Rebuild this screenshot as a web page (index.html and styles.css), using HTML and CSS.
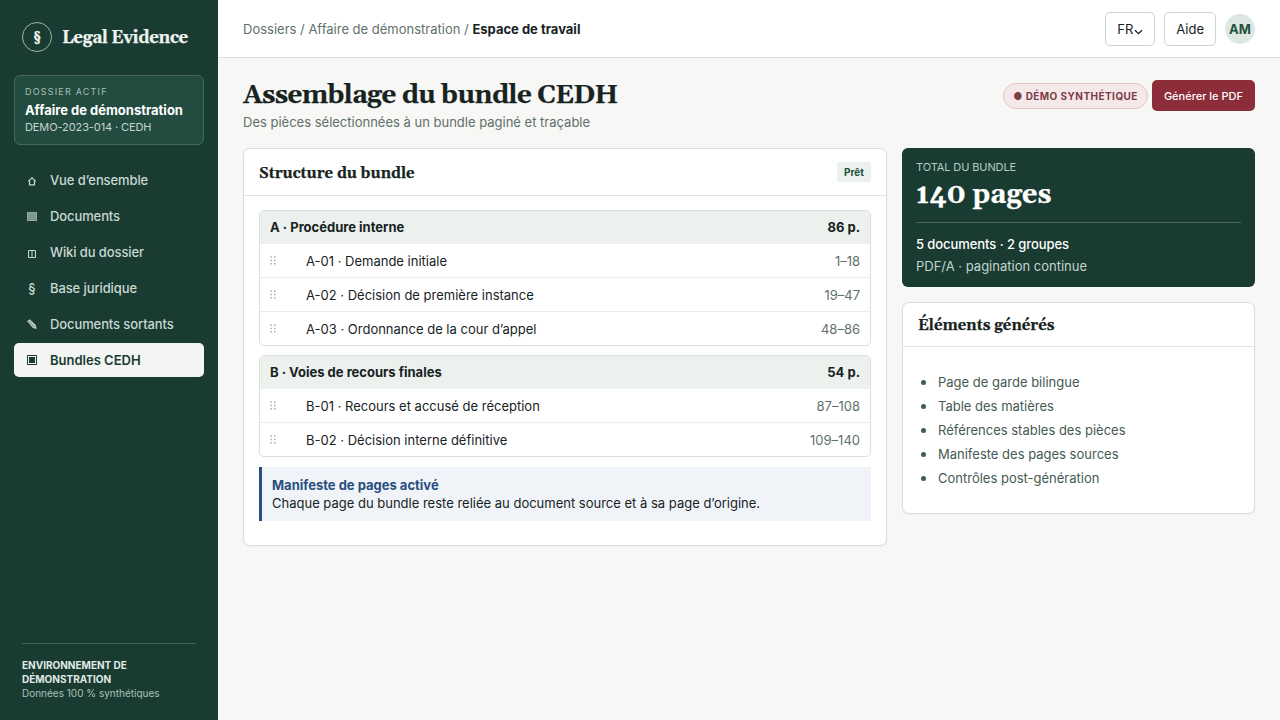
FILE: index.html
```
<!DOCTYPE html>
<html lang="fr">
<head>
    <meta charset="UTF-8">
    <meta name="viewport" content="width=device-width, initial-scale=1.0">
    <title>Legal Evidence</title>
    <link rel="stylesheet" href="styles.css">
</head>
<body>
    <svg class="sprite">
        <symbol id="grip" viewBox="0 0 6 9">
            <path d="M.4 1h1.5M4 1h1.5M.4 4.4h1.5M4 4.4h1.5M.4 7.8h1.5M4 7.8h1.5" stroke="currentColor" stroke-width="1.5"/>
        </symbol>
    </svg>
    <div class="app">
        <aside class="sidebar">
            <div class="brand"><span class="brand-mark">§</span><span>Legal Evidence</span></div>
            <div class="case">
                <small>DOSSIER ACTIF</small>
                <strong>Affaire de démonstration</strong>
                <span>DEMO-2023-014 · CEDH</span>
            </div>
            <nav class="nav">
                <a><svg viewBox="0 0 16 16"><path d="M4.3 9.4 8 5.9l3.7 3.5M5.5 8.8v4h5v-4" fill="none" stroke="currentColor" stroke-width="1.2"/></svg>Vue d’ensemble</a>
                <a><svg viewBox="0 0 16 16"><path d="M3 4h10v9H3z" fill="currentColor" opacity=".55"/><path d="M3.5 4.5h9v8h-9z" fill="none" stroke="currentColor" opacity=".35"/><path d="M4 6.5h8M4 8.5h8M4 10.5h8" stroke="currentColor" opacity=".15"/></svg>Documents</a>
                <a><svg viewBox="0 0 16 16"><path d="M4.5 6.5h7v7h-7zM8 6.5v7" fill="none" stroke="currentColor"/></svg>Wiki du dossier</a>
                <a><i>§</i>Base juridique</a>
                <a><svg viewBox="0 0 16 16"><path d="M3 5 5.8 3.3l6 5.7.9 4-3.9-.9z" fill="currentColor" opacity=".9"/><path d="m5 5 5.3 6" stroke="#193b32" stroke-width=".4"/></svg>Documents sortants</a>
                <a class="active"><svg viewBox="0 0 16 16"><path d="M3.5 3.5h9v9h-9z" fill="none" stroke="currentColor"/><path d="M5 5h6v6H5z" fill="currentColor"/></svg>Bundles CEDH</a>
            </nav>
            <div class="side-foot">
                <strong>ENVIRONNEMENT DE DÉMONSTRATION</strong>
                <span>Données 100 % synthétiques</span>
            </div>
        </aside>
        <main>
            <header class="topbar">
                <div class="crumbs">Dossiers / Affaire de démonstration / <b>Espace de travail</b></div>
                <div class="top-actions">
                    <button class="btn">FR<svg class="chevron" viewBox="0 0 9 6"><path d="M1 1.2 4.5 4.6 8 1.2" fill="none" stroke="currentColor" stroke-width="1.3"/></svg></button>
                    <button class="btn">Aide</button>
                    <span class="avatar">AM</span>
                </div>
            </header>
            <section class="content">
                <div class="page-head">
                    <div>
                        <h1>Assemblage du bundle CEDH</h1>
                        <p>Des pièces sélectionnées à un bundle paginé et traçable</p>
                    </div>
                    <div class="head-actions">
                        <span class="demo">● DÉMO SYNTHÉTIQUE</span>
                        <button class="primary">Générer le PDF</button>
                    </div>
                </div>
                <div class="grid">
                    <div class="card">
                        <div class="card-head"><h2>Structure du bundle</h2><span class="tag">Prêt</span></div>
                        <div class="card-body">
                            <div class="group">
                                <div class="group-head"><span>A · Procédure interne</span><span>86 p.</span></div>
                                <div class="row"><svg><use href="#grip"/></svg><span>A-01 · Demande initiale</span><em>1–18</em></div>
                                <div class="row"><svg><use href="#grip"/></svg><span>A-02 · Décision de première instance</span><em>19–47</em></div>
                                <div class="row"><svg><use href="#grip"/></svg><span>A-03 · Ordonnance de la cour d’appel</span><em>48–86</em></div>
                            </div>
                            <div class="group">
                                <div class="group-head"><span>B · Voies de recours finales</span><span>54 p.</span></div>
                                <div class="row"><svg><use href="#grip"/></svg><span>B-01 · Recours et accusé de réception</span><em>87–108</em></div>
                                <div class="row"><svg><use href="#grip"/></svg><span>B-02 · Décision interne définitive</span><em>109–140</em></div>
                            </div>
                            <div class="notice">
                                <strong>Manifeste de pages activé</strong>
                                <span>Chaque page du bundle reste reliée au document source et à sa page d’origine.</span>
                            </div>
                        </div>
                    </div>
                    <div class="side">
                        <div class="total">
                            <small>TOTAL DU BUNDLE</small>
                            <strong>140 pages</strong>
                            <hr>
                            <b>5 documents · 2 groupes</b>
                            <span>PDF/A · pagination continue</span>
                        </div>
                        <div class="card generated">
                            <div class="card-head"><h2>Éléments générés</h2></div>
                            <ul>
                                <li>Page de garde bilingue</li>
                                <li>Table des matières</li>
                                <li>Références stables des pièces</li>
                                <li>Manifeste des pages sources</li>
                                <li>Contrôles post-génération</li>
                            </ul>
                        </div>
                    </div>
                </div>
            </section>
        </main>
    </div>
</body>
</html>
```
FILE: styles.css
```
* {
    box-sizing: border-box;
}

body {
    margin: 0;
    font: 13px/18px Inter, sans-serif;
    color: #17231f;
    background: #f7f7f5;
}

h1, h2, p {
    margin: 0;
}

h1, h2, .brand, .total strong {
    -webkit-text-stroke: 0.25px currentColor;
}

button {
    font: inherit;
    color: inherit;
}

i, em {
    font-style: normal;
}

.sprite {
    display: none;
}

.app {
    display: grid;
    grid-template-columns: 218px 1fr;
    height: 100vh;
}

.sidebar {
    display: flex;
    flex-direction: column;
    padding: 22px 14px 20px;
    background: #193b32;
    color: #fff;
}

.brand {
    display: flex;
    align-items: center;
    gap: 10px;
    height: 30px;
    padding: 0 8px;
    font: bold 17px/24px Georgia, Gelasio, serif;
    letter-spacing: -0.35px;
    white-space: nowrap;
    color: #eef4f0;
}

.brand span:last-child {
    padding-top: 1px;
}

.brand-mark {
    display: grid;
    place-items: center;
    flex: none;
    width: 30px;
    height: 30px;
    border: 1px solid #9bb5aa;
    border-radius: 50%;
    font-size: 14px;
}

.case {
    display: flex;
    flex-direction: column;
    height: 70px;
    margin-top: 23px;
    padding: 9px 10px;
    border: 1px solid #41695c;
    border-radius: 6px;
    background: #234b40;
}

.case small {
    font-size: 9px;
    line-height: 14px;
    letter-spacing: 1.2px;
    color: #a3c0b4;
}

.case strong {
    line-height: 20px;
    margin-top: 1px;
}

.case span {
    font-size: 11px;
    line-height: 14px;
    letter-spacing: -0.1px;
    color: #c3d5cd;
}

.nav {
    display: flex;
    flex-direction: column;
    gap: 2px;
    margin-top: 18px;
}

.nav a {
    display: flex;
    align-items: center;
    gap: 10px;
    height: 34px;
    padding: 0 10px;
    border-radius: 5px;
    color: #c9d8d1;
    font-weight: 500;
    letter-spacing: -0.1px;
}

.nav i {
    width: 16px;
    text-align: center;
}

.nav svg {
    width: 16px;
    height: 16px;
}

.nav .active {
    background: #f3f5f2;
    color: #193b32;
    font-weight: 600;
    letter-spacing: 0;
}

.side-foot {
    display: flex;
    flex-direction: column;
    margin: auto 8px 0;
    padding-top: 14px;
    border-top: 1px solid #3d6256;
    font-size: 10px;
    line-height: 14px;
    color: #a9c1b7;
}

.side-foot strong {
    color: #e1ebe6;
}

.topbar {
    display: flex;
    align-items: center;
    justify-content: space-between;
    height: 58px;
    padding: 0 25px;
    border-bottom: 1px solid #d9dfdc;
    background: #fff;
}

.crumbs {
    color: #60716a;
}

.crumbs b {
    color: #17231f;
}

.top-actions {
    display: flex;
    align-items: center;
    gap: 9px;
}

.btn {
    height: 34px;
    padding: 0 11px;
    border: 1px solid #cbd4d0;
    border-radius: 5px;
    background: #fff;
}

.chevron {
    width: 9px;
    height: 6px;
    margin: 0 0 -1px 1px;
}

.avatar {
    display: grid;
    place-items: center;
    width: 30px;
    height: 30px;
    border-radius: 50%;
    background: #dde8e2;
    color: #24513f;
    font-weight: 700;
}

.content {
    padding: 20px 25px;
}

.page-head {
    display: flex;
    justify-content: space-between;
    height: 70px;
}

h1 {
    padding-top: 1px;
    font: bold 26px/33px Georgia, Gelasio, serif;
    letter-spacing: -0.6px;
}

.page-head p {
    margin-top: 1px;
    color: #60716a;
}

.head-actions {
    display: flex;
    align-items: center;
    gap: 4px;
    height: 36px;
}

.demo {
    height: 26px;
    padding: 0 9px;
    border: 1px solid #e3c3c8;
    border-radius: 13px;
    background: #f5e8e9;
    color: #7c3d46;
    font-size: 10px;
    font-weight: 700;
    line-height: 24px;
    letter-spacing: 0.45px;
}

.primary {
    height: 31px;
    margin-bottom: 1px;
    padding: 0 12px;
    border: 0;
    border-radius: 5px;
    background: #8c2d39;
    color: #fff;
    font-size: 11px;
    font-weight: 500;
}

.grid {
    display: grid;
    grid-template-columns: 1fr 353px;
    align-items: start;
    gap: 15px;
}

.card {
    border: 1px solid #d9dfdc;
    border-radius: 7px;
    background: #fff;
    box-shadow: 0 1px 2px rgba(20, 40, 30, 0.05);
}

.card-head {
    display: flex;
    align-items: center;
    justify-content: space-between;
    height: 47px;
    padding: 0 15px;
    border-bottom: 1px solid #e0e5e2;
}

h2 {
    padding-top: 2px;
    font: bold 15px Georgia, Gelasio, serif;
}

.tag {
    padding: 1px 7px;
    border-radius: 3px;
    background: #ebf2ee;
    color: #24513f;
    font-size: 10px;
    font-weight: 700;
}

.card-body {
    padding: 14px 15px 24px;
}

.group {
    margin-bottom: 9px;
    border: 1px solid #d9dfdc;
    border-radius: 5px;
    overflow: hidden;
}

.group-head {
    display: flex;
    align-items: center;
    justify-content: space-between;
    height: 33px;
    padding: 0 10px 1px;
    background: #ecf1ee;
    font-weight: 700;
}

.row {
    display: grid;
    grid-template-columns: 26px 1fr auto;
    align-items: center;
    gap: 10px;
    height: 34px;
    padding: 0 10px;
    border-bottom: 1px solid #e9edeb;
}

.row:last-child {
    height: 33px;
    border-bottom: 0;
}

.row svg {
    width: 6px;
    height: 9px;
    color: #a3afa9;
}

.row em {
    color: #60716a;
}

.notice {
    display: flex;
    flex-direction: column;
    height: 54px;
    margin-top: 10px;
    padding: 9px 10px;
    border-left: 3px solid #294f80;
    background: #f0f4f8;
}

.notice strong {
    color: #294f80;
}

.total {
    display: flex;
    flex-direction: column;
    height: 139px;
    padding: 12px 14px;
    border-radius: 6px;
    background: #193b32;
    color: #fff;
}

.total small {
    font-size: 11px;
    line-height: 14px;
    letter-spacing: -0.1px;
    color: #b5cbc1;
}

.total strong {
    font: bold 27px/34px Georgia, Gelasio, serif;
    font-variant-ligatures: none;
    margin-top: 4px;
}

.total hr {
    width: 100%;
    margin: 10px 0;
    border: 0;
    border-top: 1px solid #48685d;
}

.total b {
    line-height: 22px;
    font-weight: 500;
    letter-spacing: -0.07px;
}

.total span {
    line-height: 22px;
    color: #c3d5cd;
}

.generated {
    margin-top: 15px;
}

.generated .card-head {
    height: 44px;
}

.generated h2 {
    padding-top: 1px;
}

.generated ul {
    margin: 0;
    padding: 23px 15px 23px 18px;
    line-height: 24px;
    list-style: none;
    color: #455a51;
}

.generated li {
    display: flex;
    align-items: center;
    gap: 12px;
}

.generated li::before {
    content: "";
    width: 5px;
    height: 5px;
    margin-top: 1px;
    border-radius: 50%;
    background: #455a51;
}
```
